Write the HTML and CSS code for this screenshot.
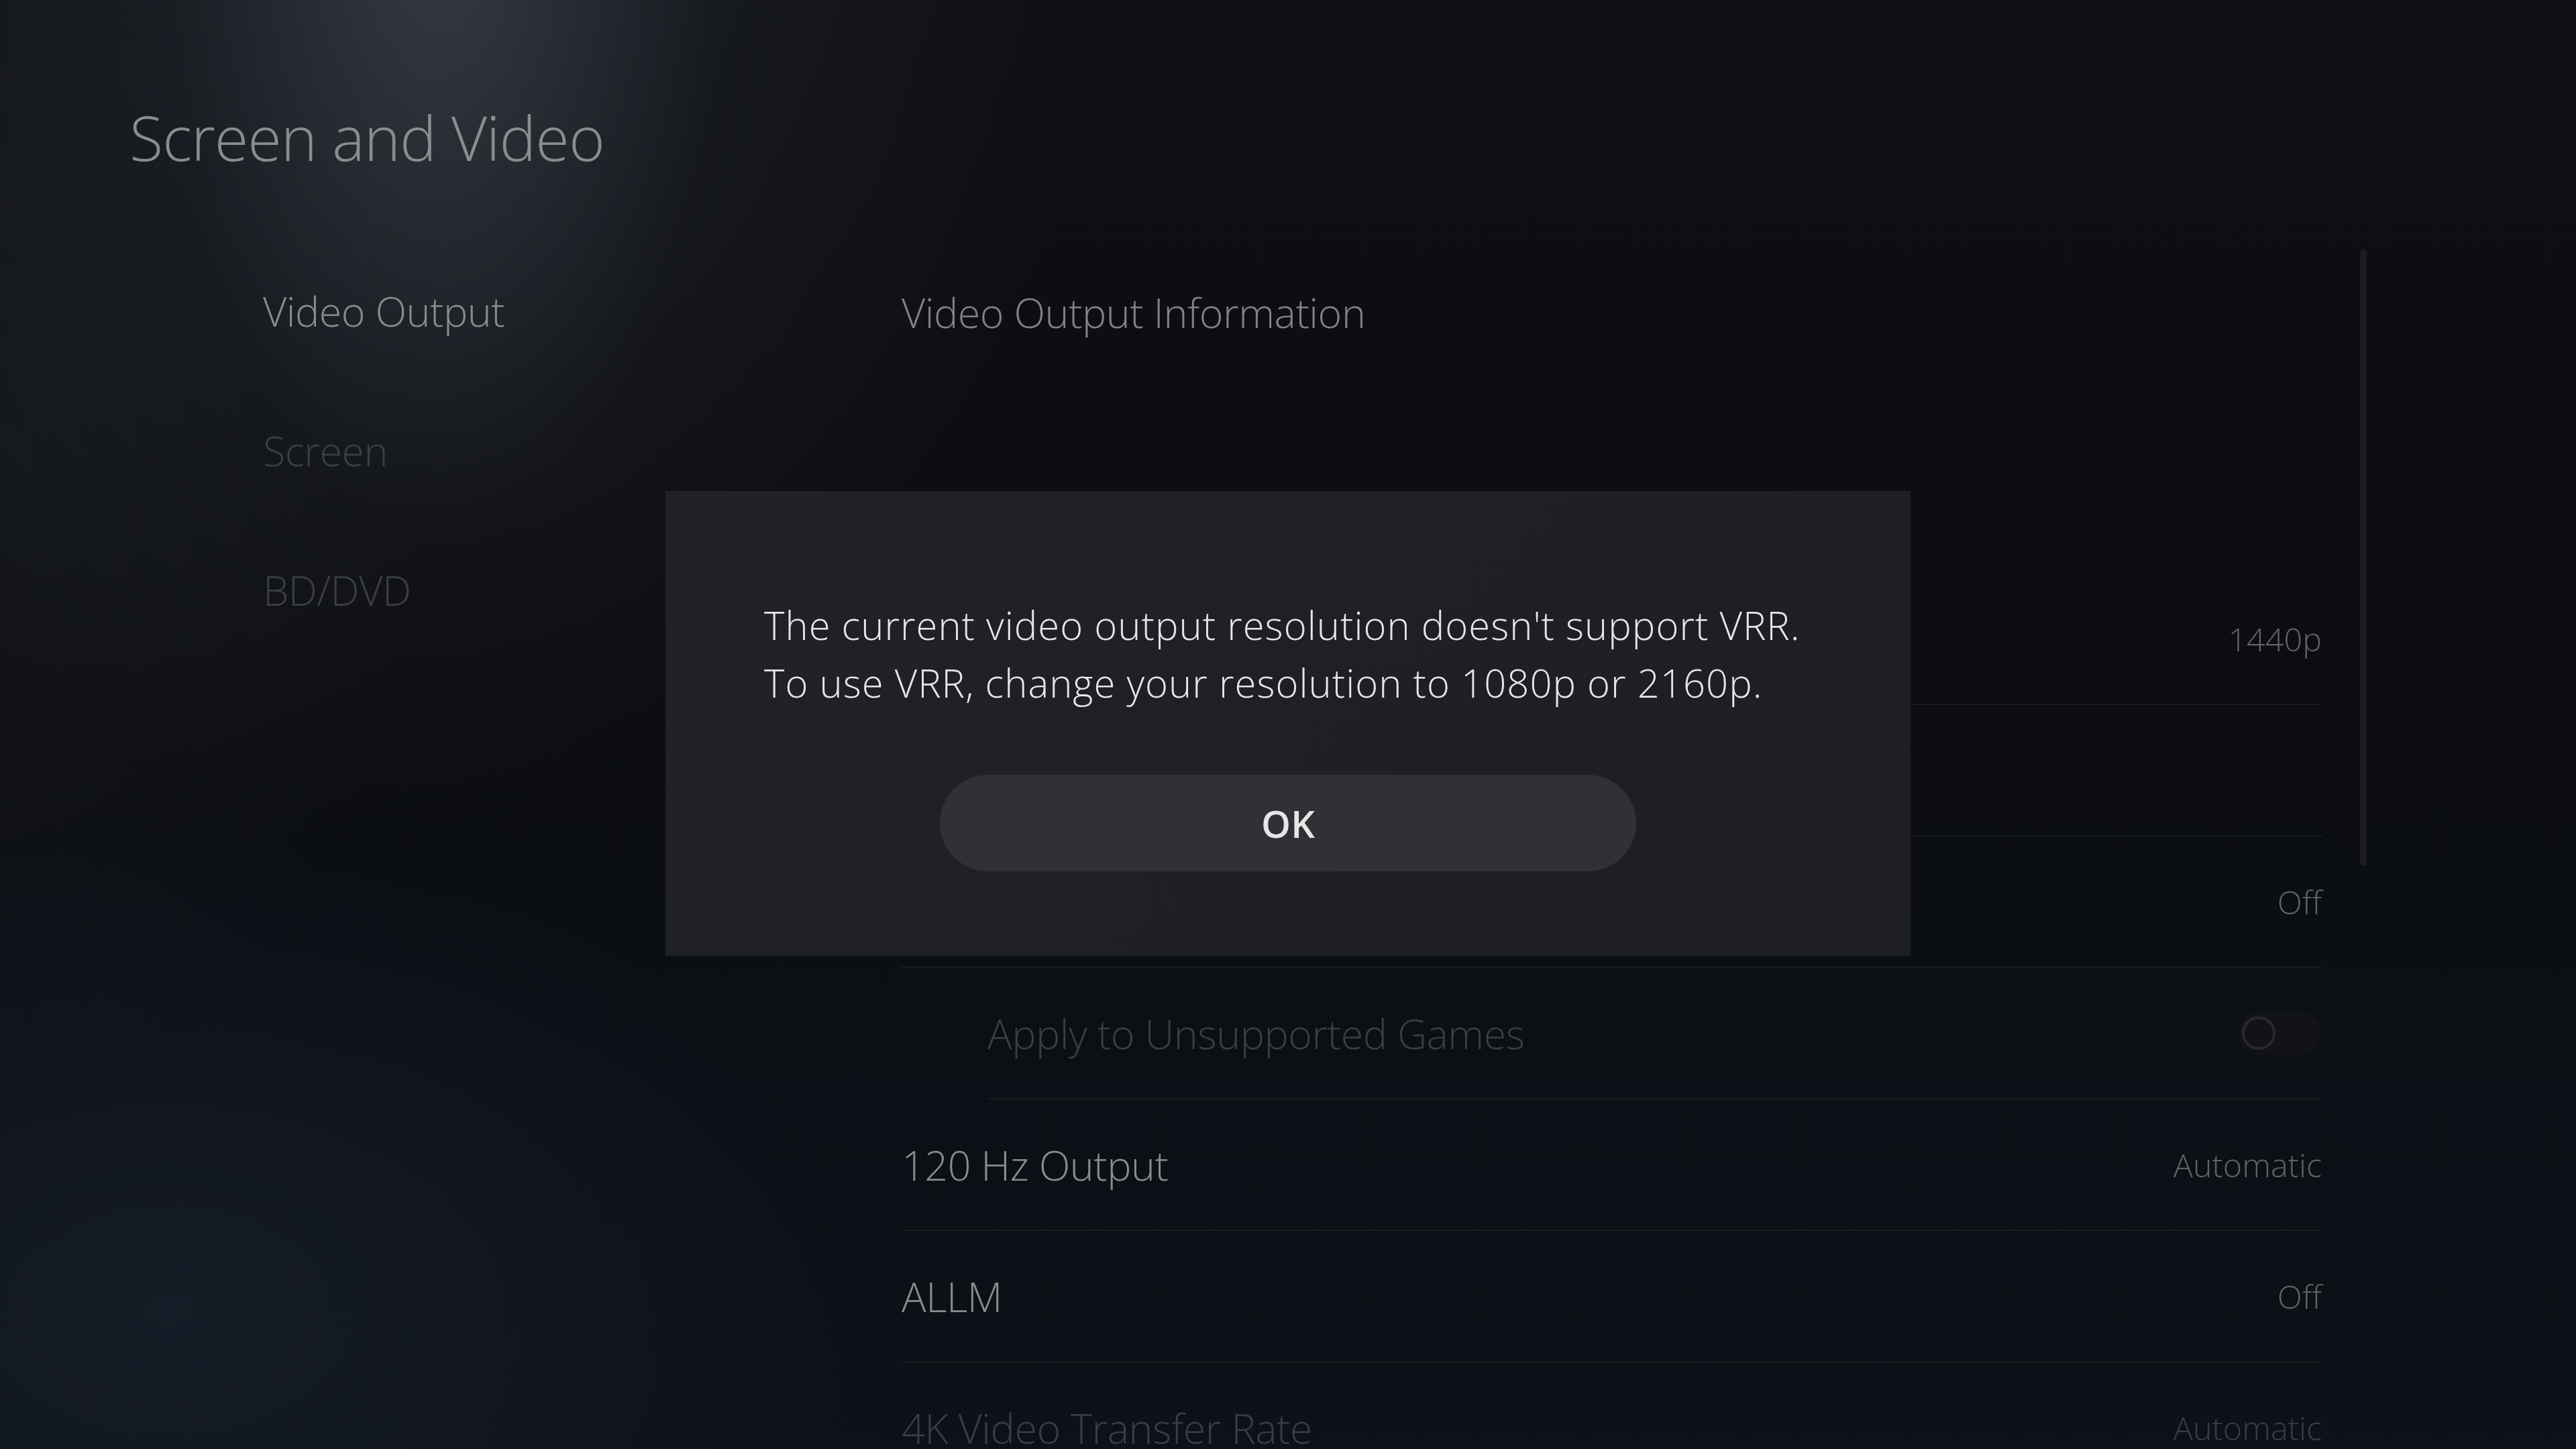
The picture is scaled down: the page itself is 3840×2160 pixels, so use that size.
FILE: index.html
```html
<!DOCTYPE html>
<html lang="en">
<head>
  <meta charset="UTF-8" />
  <meta name="viewport" content="width=device-width, initial-scale=1.0"/>
  <title>Screen and Video</title>
  <link rel="stylesheet" href="styles.css">
</head>
<body>

  <header class="page-header">
    <h1 class="page-title">Screen and Video</h1>
  </header>

  <main class="settings">
    <nav class="settings-nav">
      <a class="nav-item active">Video Output</a>
      <a class="nav-item">Screen</a>
      <a class="nav-item">BD/DVD</a>
    </nav>

    <section class="settings-panel">
      <div class="info-row">Video Output Information</div>

      <!-- labels of the first rows sit under the dialog -->
      <ul class="setting-list">
        <li class="setting-row">
          <span class="setting-label"></span>
          <span class="setting-value">1440p</span>
        </li>
        <li class="setting-row">
          <span class="setting-label"></span>
        </li>
        <li class="setting-row">
          <span class="setting-label"></span>
          <span class="setting-value">Off</span>
        </li>
        <li class="setting-row sub disabled">
          <span class="setting-label">Apply to Unsupported Games</span>
          <span class="toggle"><span class="toggle-knob"></span></span>
        </li>
        <li class="setting-row">
          <span class="setting-label">120 Hz Output</span>
          <span class="setting-value">Automatic</span>
        </li>
        <li class="setting-row">
          <span class="setting-label">ALLM</span>
          <span class="setting-value">Off</span>
        </li>
        <li class="setting-row faded">
          <span class="setting-label">4K Video Transfer Rate</span>
          <span class="setting-value">Automatic</span>
        </li>
      </ul>
    </section>

    <div class="scrollbar"></div>
  </main>

  <div class="dialog">
    <p class="dialog-text">The current video output resolution doesn't support VRR.<br>To use VRR, change your resolution to 1080p or 2160p.</p>
    <button class="dialog-btn">OK</button>
  </div>

</body>
</html>
```

FILE: styles.css
```css
html, body {
  margin: 0;
  padding: 0;
}

body {
  width: 3840px;
  height: 2160px;
  overflow: hidden;
  position: relative;
  font-family: 'Open Sans', 'Noto Sans', sans-serif;
  font-weight: 300;
  color: #8a8b8f;
  background:
    radial-gradient(ellipse 420px 900px at 660px -100px, rgba(90,92,104,0.42), transparent 100%),
    radial-gradient(ellipse 1050px 1500px at 600px -250px, rgba(48,50,60,0.55), transparent 100%),
    radial-gradient(ellipse 1500px 1000px at 250px 1950px, rgba(28,38,52,0.55), transparent 70%),
    radial-gradient(ellipse 900px 1300px at 0px 700px, rgba(30,32,40,0.45), transparent 70%),
    linear-gradient(180deg, #0d0f14 0%, #0b0d12 50%, #0d1118 100%);
}

.page-header {
  padding: 140px 0 0 193px;
}

.page-title {
  margin: 0;
  font-size: 92px;
  line-height: 130px;
  font-weight: 300;
  letter-spacing: -1px;
  color: #8b8c90;
}

.settings {
  display: grid;
  grid-template-columns: 952px 2117px 57px 10px;
  padding-left: 392px;
  margin-top: 90px;
}

.settings-nav {
  display: flex;
  flex-direction: column;
}

.nav-item {
  font-size: 61px;
  line-height: 208px;
  letter-spacing: -0.5px;
  color: #3b3e44;
}

.nav-item.active {
  color: #8a8b8f;
}

.settings-panel {
  padding-top: 8px;
}

.info-row {
  font-size: 61px;
  line-height: 196px;
  letter-spacing: -0.5px;
  color: #818286;
}

.setting-list {
  list-style: none;
  margin: 291px 0 0;
  padding: 0;
}

.setting-row {
  display: flex;
  justify-content: space-between;
  align-items: center;
  height: 194px;
  border-bottom: 2px solid #1a1c21;
}

.setting-row.sub {
  margin-left: 128px;
}

.setting-label {
  font-size: 61px;
  letter-spacing: -0.5px;
  color: #8a8b8f;
}

.setting-value {
  font-size: 48.5px;
  color: #606266;
}

.setting-row.disabled .setting-label {
  color: #3a3d42;
}

.setting-row.faded .setting-label,
.setting-row.faded .setting-value {
  color: #3a3d43;
}

.toggle {
  display: flex;
  align-items: center;
  width: 124px;
  height: 66px;
  padding: 0 5px;
  box-sizing: border-box;
  border-radius: 33px;
  background: #111318;
}

.toggle-knob {
  width: 50px;
  height: 50px;
  box-sizing: border-box;
  border: 4px solid #27292e;
  border-radius: 50%;
}

.scrollbar {
  grid-column: 4;
  width: 10px;
  height: 920px;
  margin-top: 11px;
  border-radius: 5px;
  background: #1a1c21;
}

.dialog {
  position: absolute;
  left: 992px;
  top: 732px;
  width: 1856px;
  height: 693px;
  box-sizing: border-box;
  padding: 157px 147px 0;
  background: linear-gradient(135deg, #202227, #1c1e23);
  display: flex;
  flex-direction: column;
  align-items: center;
}

.dialog-text {
  align-self: stretch;
  margin: 0;
  font-size: 58px;
  line-height: 86px;
  font-weight: 350;
  letter-spacing: 1px;
  color: #e6e6e8;
}

.dialog-btn {
  margin-top: 94px;
  width: 1038px;
  height: 144px;
  border: none;
  border-radius: 72px;
  background: #2f3136;
  font-family: 'Open Sans', 'Noto Sans', sans-serif;
  font-size: 56px;
  font-weight: 600;
  color: #e6e6e6;
}
```
